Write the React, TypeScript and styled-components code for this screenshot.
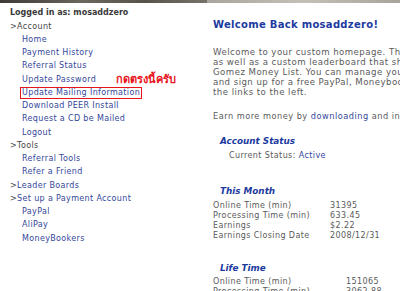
import styled, { createGlobalStyle } from 'styled-components';

const GlobalStyle = createGlobalStyle`
  html, body {
    margin: 0;
    padding: 0;
    background: #ffffff;
  }
  body {
    font-family: "DejaVu Sans", Verdana, sans-serif;
    overflow: hidden;
  }
`;

const accountLinks = [
  'Home',
  'Payment History',
  'Referral Status',
  'Update Password',
  'Update Mailing Information',
  'Download PEER Install',
  'Request a CD be Mailed',
  'Logout',
];

const toolLinks = ['Referral Tools', 'Refer a Friend'];
const paymentLinks = ['PayPal', 'AliPay', 'MoneyBookers'];

const thisMonth = [
  ['Online Time (min)', '31395'],
  ['Processing Time (min)', '633.45'],
  ['Earnings', '$2.22'],
  ['Earnings Closing Date', '2008/12/31'],
];

const lifeTime = [
  ['Online Time (min)', '151065'],
  ['Processing Time (min)', '3062.88'],
];

function App() {
  return (
    <Page>
      <GlobalStyle />
      <TopStrip>
        <StripLeft />
        <StripRight />
      </TopStrip>
      <Columns>
        <LeftCol>
          <LoggedIn>Logged in as: mosaddzero</LoggedIn>
          <Section>&gt;Account</Section>
          {accountLinks.map((l) =>
            l === 'Update Mailing Information' ? (
              <NavItem key={l}>
                <Boxed href="#">{l}</Boxed>
                <Note>กดตรงนี้ครับ</Note>
              </NavItem>
            ) : (
              <NavItem key={l}>
                <NavLink href="#">{l}</NavLink>
              </NavItem>
            )
          )}
          <Section>&gt;Tools</Section>
          {toolLinks.map((l) => (
            <NavItem key={l}>
              <NavLink href="#">{l}</NavLink>
            </NavItem>
          ))}
          <Section>
            &gt;<SectionLink href="#">Leader Boards</SectionLink>
          </Section>
          <Section>
            &gt;<SectionLink href="#">Set up a Payment Account</SectionLink>
          </Section>
          {paymentLinks.map((l) => (
            <NavItem key={l}>
              <NavLink href="#">{l}</NavLink>
            </NavItem>
          ))}
        </LeftCol>
        <RightCol>
          <Welcome>Welcome Back mosaddzero!</Welcome>
          <Intro>
            Welcome to your custom homepage. This page shows your statistics
            <br />
            as well as a custom leaderboard that shows where you stand on the
            <br />
            Gomez Money List. You can manage your account, refer your friends
            <br />
            and sign up for a free PayPal, Moneybookers or AliPay account using
            <br />
            the links to the left.
          </Intro>
          <Earn>
            Earn more money by <TextLink href="#">downloading</TextLink> and installing PEER on more computers.
          </Earn>
          <Heading $top={14}>Account Status</Heading>
          <Status>
            Current Status: <TextLink href="#">Active</TextLink>
          </Status>
          <Heading $top={23.7}>This Month</Heading>
          <Stats $label={117}>
            {thisMonth.map(([k, v]) => (
              <Row key={k}>
                <span>{k}</span>
                <span>{v}</span>
              </Row>
            ))}
          </Stats>
          <Heading $top={20.7}>Life Time</Heading>
          <Stats $label={133} $gap={3}>
            {lifeTime.map(([k, v]) => (
              <Row key={k}>
                <span>{k}</span>
                <span>{v}</span>
              </Row>
            ))}
          </Stats>
        </RightCol>
      </Columns>
    </Page>
  );
}

const Page = styled.div`
  width: 400px;
  height: 291px;
  overflow: hidden;
`;

const TopStrip = styled.div`
  display: flex;
  height: 3px;
`;

const StripLeft = styled.div`
  width: 207px;
  background: linear-gradient(90deg, #3e3a36 0%, #6b665e 40%, #58534c 70%, #77726a 100%);
`;

const StripRight = styled.div`
  flex: 1;
  background: linear-gradient(90deg, #a9a59e 0%, #c4c0b8 50%, #a8a49c 100%);
`;

const Columns = styled.div`
  display: flex;
  align-items: flex-start;
`;

const LeftCol = styled.div`
  width: 205px;
  flex-shrink: 0;
  padding: 3.4px 0 0 10px;
  box-sizing: border-box;
  font-size: 8px;
  line-height: 13.25px;
  letter-spacing: 0.35px;
  color: #444;
  white-space: nowrap;
`;

const LoggedIn = styled.div`
  font-weight: bold;
  letter-spacing: 0;
  color: #3a3a3a;
`;

const Section = styled.div`
  color: #444;
`;

const SectionLink = styled.a`
  color: #34479a;
  text-decoration: none;
`;

const NavItem = styled.div`
  position: relative;
  padding-left: 12px;
`;

const NavLink = styled.a`
  color: #34479a;
  text-decoration: none;
`;

const Boxed = styled(NavLink)`
  display: inline-block;
  margin-left: -2px;
  padding: 0 1px;
  line-height: 10px;
  border: 1px solid #e8141c;
`;

const Note = styled.span`
  position: absolute;
  left: 106px;
  top: -13px;
  font-size: 11px;
  font-weight: bold;
  letter-spacing: 0;
  color: #e8141c;
`;

const RightCol = styled.div`
  flex: 1;
  min-width: 0;
  overflow: hidden;
  padding-left: 8px;
  white-space: nowrap;
  color: #5a5a5a;
`;

const Welcome = styled.div`
  margin-top: 16px;
  font-size: 10px;
  line-height: 12px;
  letter-spacing: 0.3px;
  font-weight: bold;
  color: #1c3aa0;
`;

const Intro = styled.div`
  margin-top: 15.7px;
  font-size: 8.6px;
  line-height: 10px;
  letter-spacing: 0.45px;
  color: #5a5a5a;
`;

const Earn = styled.div`
  margin-top: 14.3px;
  font-size: 8.2px;
  line-height: 10px;
  letter-spacing: 0.5px;
`;

const TextLink = styled.a`
  color: #34479a;
  text-decoration: none;
`;

const Heading = styled.div<{ $top: number }>`
  margin-top: ${(p) => p.$top}px;
  padding-left: 7px;
  font-size: 8.8px;
  line-height: 12px;
  font-weight: bold;
  font-style: italic;
  color: #1c3aa0;
`;

const Status = styled.div`
  margin-top: 4px;
  padding-left: 16px;
  font-size: 8px;
  line-height: 10px;
  letter-spacing: 0.4px;
`;

const Stats = styled.div<{ $label: number; $gap?: number }>`
  margin-top: ${(p) => p.$gap ?? 4.3}px;
  display: grid;
  grid-template-columns: ${(p) => p.$label}px auto;
  font-size: 8px;
  line-height: 10px;
  letter-spacing: 0.4px;
`;

const Row = styled.div`
  display: contents;
`;

export default App;
